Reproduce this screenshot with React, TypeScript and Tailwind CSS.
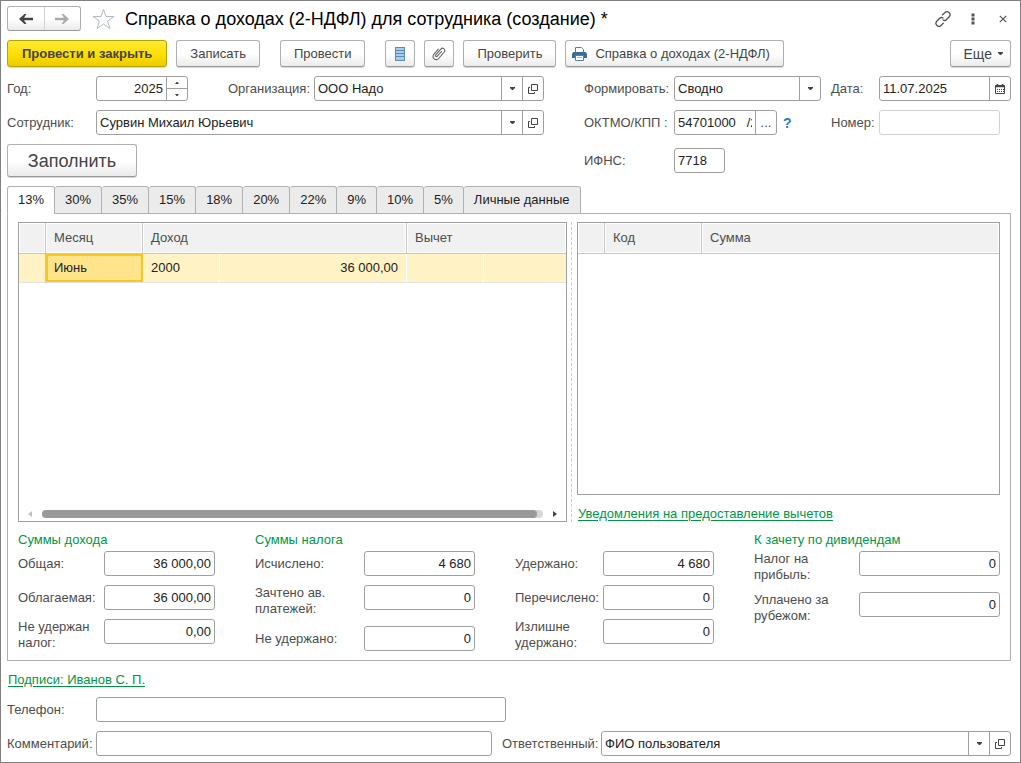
import { useState } from 'react';
import type { ReactNode } from 'react';

const TABS = ['13%', '30%', '35%', '15%', '18%', '20%', '22%', '9%', '10%', '5%', 'Личные данные'];

const SUMS = [
  {
    title: 'Суммы дохода',
    box: 'w-[197px]',
    label: 'w-[86px]',
    rows: [
      { id: 'total', label: 'Общая:', value: '36 000,00' },
      { id: 'taxable', label: 'Облагаемая:', value: '36 000,00' },
      { id: 'not-withheld-income', label: 'Не удержан налог:', value: '0,00' },
    ],
  },
  {
    title: 'Суммы налога',
    box: 'w-[220px]',
    label: 'w-[109px] pr-6',
    rows: [
      { id: 'calculated', label: 'Исчислено:', value: '4 680' },
      { id: 'advance', label: 'Зачтено ав. платежей:', value: '0' },
      { id: 'not-withheld', label: 'Не удержано:', value: '0' },
    ],
  },
  {
    title: '',
    box: 'w-[199px]',
    label: 'w-[88px]',
    rows: [
      { id: 'withheld', label: 'Удержано:', value: '4 680' },
      { id: 'transferred', label: 'Перечислено:', value: '0' },
      { id: 'over-withheld', label: 'Излишне удержано:', value: '0' },
    ],
  },
  {
    title: 'К зачету по дивидендам',
    box: 'flex-1',
    label: 'w-[105px] pr-6',
    rows: [
      { id: 'profit-tax', label: 'Налог на прибыль:', value: '0' },
      { id: 'abroad', label: 'Уплачено за рубежом:', value: '0' },
    ],
  },
];

const frame = 'flex h-[25px] overflow-hidden rounded-[3px] border border-[#a0a0a0] bg-white text-[#222]';
const text = 'w-full min-w-0 flex-1 bg-transparent px-[3px] outline-none';
const cell = 'flex shrink-0 items-center justify-center border-l border-[#a0a0a0] text-[#444]';
const button =
  'flex h-[27px] shrink-0 items-center justify-center rounded-[3px] border border-[#b0b0b0] border-b-[#999] bg-gradient-to-b from-white from-50% to-[#ebebeb] text-[#444] shadow-[0_1px_0_#d8d8d8]';
const th = 'border-r border-b border-[#c6c6c6] bg-[#f1f1f1] px-2 text-left font-normal text-[#4d4d4d] shadow-[inset_0_0_0_1px_#fff]';

function Caret() {
  return (
    <svg width="5" height="3" viewBox="0 0 5 3" className="shrink-0" fill="currentColor">
      <path d="M0 0h5v1L3 3H2L0 1z" />
    </svg>
  );
}

function OpenIcon() {
  return (
    <svg width="10" height="10" viewBox="0 0 10 10" fill="none" stroke="currentColor">
      <path d="M3.5 0.5h6v6h-6zM2 3.500H0.5v6h6V8" />
    </svg>
  );
}

function LookupButtons({ name }: { name: string }) {
  return (
    <>
      <button aria-label={`${name}: выбрать`} className={`${cell} w-[21px]`}>
        <Caret />
      </button>
      <button aria-label={`${name}: открыть`} className={`${cell} w-[21px]`}>
        <OpenIcon />
      </button>
    </>
  );
}

function Label({ htmlFor, className = '', children }: { htmlFor: string; className?: string; children: ReactNode }) {
  return (
    <label htmlFor={htmlFor} className={`shrink-0 text-[#4d4d4d] ${className}`}>
      {children}
    </label>
  );
}

function ArrowIcon({ className }: { className: string }) {
  return (
    <svg width="14" height="10" viewBox="0 0 14 10" className={className} fill="currentColor">
      <path d="M0 5L5.500 0H7.500L5 3.700H14V6.300H5L7.500 10H5.500z" />
    </svg>
  );
}

function TitleBar() {
  return (
    <header className="flex h-[25px] items-center text-[#555]">
      <div className="flex h-[25px] w-[74px] shrink-0 rounded-[3px] border border-[#b0b0b0] border-b-[#999] bg-gradient-to-b from-white from-50% to-[#ebebeb]">
        <button aria-label="Назад" className="flex flex-1 items-center justify-center">
          <ArrowIcon className="text-[#444]" />
        </button>
        <button aria-label="Вперед" className="flex flex-1 items-center justify-center border-l border-[#d0d0d0]">
          <ArrowIcon className="rotate-180 text-[#ababab]" />
        </button>
      </div>
      <button aria-label="В избранное" className="ml-[11px] shrink-0">
        <svg width="23" height="22" viewBox="0 0 23 22" fill="none" stroke="#b4bac4">
          <path d="M11.5 1.5L14 8.5H22L15.6 13L18 20.5L11.5 16L5 20.5L7.4 13L1 8.5H9z" />
        </svg>
      </button>
      <h1 className="ml-[10px] flex-1 text-[18px] leading-6 text-black">
        Справка о доходах (2-НДФЛ) для сотрудника (создание) *
      </h1>
      <button aria-label="Получить ссылку" className="mr-5">
        <svg width="16" height="16" viewBox="0 0 16 16" fill="none" stroke="currentColor" strokeWidth="1.3" strokeLinecap="round">
          <path d="M7.500 3.800L9.800 1.700A2.700 2.700 0 0 1 14.200 5.700L11.300 8.700A2.600 2.600 0 0 1 8 9" />
          <path d="M8.300 12.200L6.200 14.300A2.700 2.700 0 0 1 1.800 10.300L4.700 7.300A2.600 2.600 0 0 1 8 7" />
        </svg>
      </button>
      <button aria-label="Меню" className="mr-6">
        <svg width="4" height="12" viewBox="0 0 4 12" fill="currentColor">
          <path d="M0.500 0.500h3v3h-3zM0.500 4.500h3v3h-3zM0.500 8.500h3v3h-3z" />
        </svg>
      </button>
      <button aria-label="Закрыть" className="mr-1">
        <svg width="8" height="8" viewBox="0 0 8 8" fill="none" stroke="currentColor" strokeWidth="1.2">
          <path d="M0.8 0.8L7.2 7.2M7.2 0.8L0.8 7.2" />
        </svg>
      </button>
    </header>
  );
}

function Toolbar() {
  return (
    <div className="mt-[9px] flex">
      <button className="flex h-[27px] shrink-0 items-center rounded-[3px] border border-[#b8a000] bg-gradient-to-b from-[#ffea33] via-[#ffe000] to-[#eccb00] px-[14px] font-bold text-[#444] shadow-[0_1px_0_#d8d8d8]">
        Провести и закрыть
      </button>
      <button className={`${button} ml-[9px] px-[13px]`}>Записать</button>
      <button className={`${button} ml-5 px-[13px]`}>Провести</button>
      <button aria-label="Реестр" className={`${button} ml-5 w-[30px]`}>
        <svg width="10" height="14" viewBox="0 0 10 14">
          <path d="M0 0h10v14H0z" fill="#5b8db3" />
          <path d="M1 1h8v2H1zM1 4h8v2H1zM1 7h8v2H1zM1 10h8v3H1z" fill="#a9cde6" />
        </svg>
      </button>
      <button aria-label="Присоединенные файлы" className={`${button} ml-[9px] w-[30px]`}>
        <svg width="14" height="14" viewBox="0 0 14 14" fill="none" stroke="#666" strokeWidth="1.1" strokeLinecap="round">
          <path d="M9.5 4.500L5.300 9.200A1 1 0 0 1 3.800 7.800L8.800 2.100A2.200 2.200 0 0 1 12.200 5L6.700 11.500A3.200 3.200 0 0 1 1.800 7.300L6.300 2.200" />
        </svg>
      </button>
      <button className={`${button} ml-[9px] px-[13px]`}>Проверить</button>
      <button className={`${button} ml-[9px] gap-2 pr-[13px] pl-[6px]`}>
        <svg width="15" height="14" viewBox="0 0 15 14">
          <path d="M3.5 0.5h6l2 2V6h-8z" fill="#fff" stroke="#5580a5" />
          <path d="M1.5 5h12L15 6.5V11H0V6.5z" fill="#3a6c98" />
          <path d="M3.5 8.5h8v5h-8z" fill="#fff" stroke="#5580a5" />
          <path d="M5 10.5h5" stroke="#9db8cf" />
        </svg>
        Справка о доходах (2-НДФЛ)
      </button>
      <button className={`${button} ml-auto gap-[6px] pr-[7px] pl-[13px] text-[14px]`}>
        Еще
        <Caret />
      </button>
    </div>
  );
}

function HeaderFields() {
  return (
    <div className="mt-[9px] flex items-start">
      <div className="flex min-w-0 flex-1 flex-col gap-[9px]">
        <div className="flex items-center">
          <Label htmlFor="year" className="w-[89px]">Год:</Label>
          <div className={`${frame} w-[92px] shrink-0`}>
            <input id="year" defaultValue="2025" className={`${text} text-right`} />
            <div className="flex w-[21px] shrink-0 flex-col border-l border-[#a0a0a0] text-[#444]">
              <button aria-label="Увеличить" className="flex flex-1 items-center justify-center border-b border-[#a0a0a0]">
                <svg width="4" height="2" viewBox="0 0 4 2" fill="currentColor"><path d="M0 2h4L2.500 0h-1z" /></svg>
              </button>
              <button aria-label="Уменьшить" className="flex flex-1 items-center justify-center">
                <svg width="4" height="2" viewBox="0 0 4 2" fill="currentColor"><path d="M0 0h4L2.500 2h-1z" /></svg>
              </button>
            </div>
          </div>
          <Label htmlFor="org" className="ml-10 w-[86px]">Организация:</Label>
          <div className={`${frame} flex-1`}>
            <input id="org" defaultValue="ООО Надо" className={text} />
            <LookupButtons name="Организация" />
          </div>
        </div>
        <div className="flex items-center">
          <Label htmlFor="employee" className="w-[89px]">Сотрудник:</Label>
          <div className={`${frame} flex-1`}>
            <input id="employee" defaultValue="Сурвин Михаил Юрьевич" className={text} />
            <LookupButtons name="Сотрудник" />
          </div>
        </div>
        <button className="flex h-[33px] w-[130px] items-center justify-center rounded-[3px] border border-[#b0b0b0] border-b-[#999] bg-gradient-to-b from-white from-50% to-[#ebebeb] text-[18px] text-[#444] shadow-[0_1px_0_#d8d8d8]">
          Заполнить
        </button>
      </div>

      <div className="ml-10 flex w-[427px] shrink-0 flex-col">
        <div className="flex items-center">
          <Label htmlFor="mode" className="w-[90px]">Формировать:</Label>
          <div className={`${frame} relative w-[147px]`}>
            <select id="mode" className="w-full appearance-none bg-transparent px-[3px] outline-none">
              <option>Сводно</option>
            </select>
            <span className="pointer-events-none absolute inset-y-0 right-0 flex w-[21px] items-center justify-center border-l border-[#a0a0a0] text-[#444]">
              <Caret />
            </span>
          </div>
          <Label htmlFor="date" className="ml-[10px] w-12">Дата:</Label>
          <div className={`${frame} flex-1`}>
            <input id="date" defaultValue="11.07.2025" className={text} />
            <button aria-label="Календарь" className={`${cell} w-[21px]`}>
              <svg width="10" height="10" viewBox="0 0 10 10" fill="none" stroke="currentColor">
                <path d="M0.500 1.500h9v8h-9z" />
                <path d="M0 2.500h10M2.500 0v2M7.500 0v2" strokeWidth="1.500" />
                <path d="M2 5.500h7M2 7.500h7" strokeDasharray="1 1" />
              </svg>
            </button>
          </div>
        </div>
        <div className="mt-[9px] flex items-center">
          <Label htmlFor="oktmo" className="w-[90px]">ОКТМО/КПП :</Label>
          <div className={`${frame} w-[103px]`}>
            <input id="oktmo" defaultValue="54701000   /2" className={text} />
            <button aria-label="Выбрать ОКТМО/КПП" className={`${cell} w-[21px]`}>...</button>
          </div>
          <button aria-label="Справка" className="ml-[6px] w-12 text-left text-[14px] font-bold text-[#1a80c8]">?</button>
          <Label htmlFor="number" className="w-12">Номер:</Label>
          <input id="number" className="h-[25px] w-[121px] rounded-[3px] border border-[#d2d2d2] px-[3px] outline-none" />
        </div>
        <div className="mt-[13px] flex items-center">
          <Label htmlFor="ifns" className="w-[90px]">ИФНС:</Label>
          <div className={`${frame} w-[51px]`}>
            <input id="ifns" defaultValue="7718" className={text} />
          </div>
        </div>
      </div>
    </div>
  );
}

function IncomeTable() {
  return (
    <div className="flex min-w-0 flex-1 flex-col border border-[#a0a0a0]">
      <table className="w-full table-fixed border-separate border-spacing-0">
        <colgroup>
          <col className="w-[27px]" />
          <col className="w-[97px]" />
          <col className="w-[77px]" />
          <col className="w-[187px]" />
          <col className="w-[77px]" />
          <col />
        </colgroup>
        <thead>
          <tr className="h-[31px]">
            <th className={th} />
            <th className={th}>Месяц</th>
            <th className={th} colSpan={2}>Доход</th>
            <th className={`${th} border-r-0`} colSpan={2}>Вычет</th>
          </tr>
        </thead>
        <tbody>
          <tr className="h-[29px] bg-[#fff2c4] text-[#222]">
            <td className="border-r border-b border-[#e3e3e3] border-r-[#c6c6c6]" />
            <td className="border-b border-[#e3e3e3] bg-[#ffe48c] px-2 shadow-[inset_0_0_0_2px_#f9c620]">Июнь</td>
            <td className="border-r border-b border-[#e3e3e3] border-r-white px-2">2000</td>
            <td className="border-r border-b border-[#e3e3e3] border-r-white px-2 text-right">36 000,00</td>
            <td className="border-r border-b border-[#e3e3e3] border-r-white" />
            <td className="border-b border-[#e3e3e3]" />
          </tr>
        </tbody>
      </table>
      {/* Горизонтальная прокрутка */}
      <div className="mt-auto flex h-[15px] items-center gap-[10px] px-[9px]">
        <svg width="4" height="6" viewBox="0 0 4 6" fill="#c0c0c0"><path d="M4 0v6L0 3z" /></svg>
        <div className="h-2 flex-1 rounded-full bg-[#d6d6d6] pr-[6px]">
          <div className="h-2 rounded-full bg-[#999]" />
        </div>
        <svg width="4" height="6" viewBox="0 0 4 6" fill="#444"><path d="M0 0v6L4 3z" /></svg>
      </div>
    </div>
  );
}

function DeductionTable() {
  return (
    <div className="flex w-[423px] shrink-0 flex-col">
      <div className="flex-1 border border-[#a0a0a0]">
        <table className="w-full table-fixed border-separate border-spacing-0">
          <colgroup>
            <col className="w-[27px]" />
            <col className="w-[97px]" />
            <col />
          </colgroup>
          <thead>
            <tr className="h-[31px]">
              <th className={th} />
              <th className={th}>Код</th>
              <th className={`${th} border-r-0`}>Сумма</th>
            </tr>
          </thead>
        </table>
      </div>
      <a href="#notices" className="mt-[11px] self-start pl-px text-[#009646] underline underline-offset-2">
        Уведомления на предоставление вычетов
      </a>
    </div>
  );
}

function Sums() {
  return (
    <div className="mt-[10px] flex gap-10">
      {SUMS.map((group) => (
        <div key={group.rows[0].id} className={`flex flex-col ${group.box}`}>
          <h2 className="mb-[3px] h-4 whitespace-nowrap text-[#009646]">{group.title}</h2>
          <div className="flex flex-col gap-[9px]">
            {group.rows.map((row) => (
              <div key={row.id} className="flex items-start">
                <Label htmlFor={row.id} className={`flex min-h-[25px] items-center ${group.label}`}>
                  {row.label}
                </Label>
                <div className={`${frame} flex-1`}>
                  <input id={row.id} defaultValue={row.value} className={`${text} text-right`} />
                </div>
              </div>
            ))}
          </div>
        </div>
      ))}
    </div>
  );
}

export default function App() {
  const [tab, setTab] = useState('13%');

  return (
    <div className="flex min-h-screen flex-col border border-[#808080] bg-white pt-[5px] pr-[9px] pb-[6px] pl-[6px] font-['Liberation_Sans',Arial,sans-serif] text-[13px] leading-4">
      <TitleBar />
      <Toolbar />
      <HeaderFields />

      <div role="tablist" className="relative z-10 mt-[9px] -mb-px flex">
        {TABS.map((name, i) => (
          <button
            key={name}
            role="tab"
            aria-selected={tab === name}
            onClick={() => setTab(name)}
            className={`h-7 rounded-t-[3px] border-t border-r border-b border-[#b0b0b0] px-[10px] text-[#222] ${i === 0 ? 'border-l' : ''} ${
              tab === name ? 'border-b-white bg-white' : 'bg-[#ebebeb]'
            }`}
          >
            {name}
          </button>
        ))}
      </div>

      <main className="flex flex-1 flex-col border border-[#b0b0b0] px-[10px] pt-2 pb-[9px]">
        <div className="flex flex-1">
          <IncomeTable />
          <div className="mr-[5px] ml-1 w-px border-l border-dashed border-[#ccc]" />
          <DeductionTable />
        </div>
        <Sums />
      </main>

      <a href="#signatures" className="mt-[11px] self-start pl-px text-[#009646] underline underline-offset-2">
        Подписи: Иванов С. П.
      </a>
      <div className="mt-[9px] flex items-center">
        <Label htmlFor="phone" className="w-[89px]">Телефон:</Label>
        <div className={`${frame} w-[410px]`}>
          <input id="phone" className={text} />
        </div>
      </div>
      <div className="mt-[9px] flex items-center">
        <Label htmlFor="comment" className="w-[89px]">Комментарий:</Label>
        <div className={`${frame} w-[396px]`}>
          <input id="comment" className={text} />
        </div>
        <Label htmlFor="owner" className="ml-[10px] w-[99px]">Ответственный:</Label>
        <div className={`${frame} flex-1`}>
          <input id="owner" defaultValue="ФИО пользователя" className={text} />
          <LookupButtons name="Ответственный" />
        </div>
      </div>
    </div>
  );
}
